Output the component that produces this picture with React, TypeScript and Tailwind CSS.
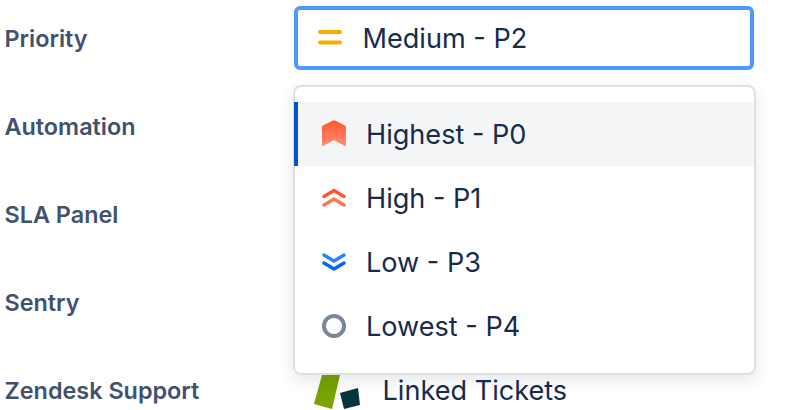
import React from 'react';

const labels = ['Priority', 'Automation', 'SLA Panel', 'Sentry', 'Zendesk Support'];

function MediumIcon() {
  return (
    <svg width="24" height="24" viewBox="0 0 24 24" fill="#ffab00">
      <rect x="0" y="4" width="24" height="4" rx="2" />
      <rect x="0" y="14.5" width="24" height="4" rx="2" />
    </svg>
  );
}

function HighestIcon() {
  return (
    <svg width="24" height="28" viewBox="0 0 24 28">
      <defs>
        <linearGradient id="highest" x1="0" y1="0" x2="0" y2="1">
          <stop offset="0" stopColor="#ff5630" />
          <stop offset="1" stopColor="#ff8f73" />
        </linearGradient>
      </defs>
      <path
        d="M11 0.5 Q12 0 13 0.5 L23 5.5 Q24 6 24 7 V25 Q24 26.5 22.5 25.8 L12.8 20.4 Q12 20 11.2 20.4 L1.5 25.8 Q0 26.5 0 25 V7 Q0 6 1 5.5 Z"
        fill="url(#highest)"
      />
    </svg>
  );
}

function HighIcon() {
  return (
    <svg width="24" height="20" viewBox="0 0 24 20" fill="none" strokeWidth="3.4" strokeLinecap="round" strokeLinejoin="round">
      <path d="M2 8.5 L12 2.5 L22 8.5" stroke="#ff5630" />
      <path d="M2 17 L12 11 L22 17" stroke="#ff7452" />
    </svg>
  );
}

function LowIcon() {
  return (
    <svg width="24" height="20" viewBox="0 0 24 20" fill="none" strokeWidth="3.4" strokeLinecap="round" strokeLinejoin="round">
      <path d="M2 3 L12 9 L22 3" stroke="#2684ff" />
      <path d="M2 11 L12 17 L22 11" stroke="#0065ff" />
    </svg>
  );
}

function LowestIcon() {
  return (
    <svg width="24" height="24" viewBox="0 0 24 24" fill="none">
      <circle cx="12" cy="12" r="10" stroke="#7a869a" strokeWidth="4" />
    </svg>
  );
}

function ZendeskLogo() {
  return (
    <svg width="50" height="36" viewBox="0 0 50 36">
      <path d="M9 0 H27 L19 34 L1 29 Z" fill="#78a300" />
      <path d="M27 18 L45 13 L47 30 L31 34 Z" fill="#03363d" />
    </svg>
  );
}

const options = [
  { name: 'Highest - P0', icon: <HighestIcon />, active: true },
  { name: 'High - P1', icon: <HighIcon />, active: false },
  { name: 'Low - P3', icon: <LowIcon />, active: false },
  { name: 'Lowest - P4', icon: <LowestIcon />, active: false },
];

export default function App() {
  return (
    <div className="relative h-[410px] w-[786px] overflow-hidden bg-white font-['Inter',sans-serif]">
      <div className="flex">
        <div className="flex w-[294px] flex-col pl-[4.5px] pt-[17px]">
          {labels.map((label) => (
            <div key={label} className="flex h-[88px] items-start text-[23.4px] leading-[44px] font-semibold whitespace-nowrap text-[#42526e]">
              {label}
            </div>
          ))}
        </div>
        <div className="flex flex-col pt-[6px]">
          <div className="flex h-[64px] w-[460px] items-center rounded-[6px] border-[4px] border-[#4c9aff] pl-[20px] text-[27.1px] text-[#172b4d]">
            <MediumIcon />
            <span className="ml-[20.5px] mt-[2px]">Medium - P2</span>
          </div>
          <div className="mt-[303px] flex items-start pl-[19px] text-[27.1px] leading-[36px] text-[#172b4d]">
            <span className="mt-[2px]">
              <ZendeskLogo />
            </span>
            <span className="ml-[19.5px] whitespace-nowrap">Linked Tickets</span>
          </div>
        </div>
      </div>

      {/* Dropdown menu */}
      <div className="absolute left-[292.5px] top-[85px] z-10 w-[463.5px] rounded-[8px] border-2 border-[#dfdfdf] bg-white py-[15px] shadow-[0_6px_16px_rgba(9,30,66,0.1)]">
        {options.map((opt) => (
          <div
            key={opt.name}
            className={
              opt.active
                ? 'ml-[-1px] flex h-[64px] items-center border-l-4 border-[#0052cc] bg-[#f4f5f7] text-[27.1px] text-[#172b4d]'
                : 'ml-[-1px] flex h-[64px] items-center border-l-4 border-transparent text-[27.1px] text-[#172b4d]'
            }
          >
            <span className="ml-[24px] flex w-[24px] justify-center">{opt.icon}</span>
            <span className="ml-[20.5px] mt-[2px]">{opt.name}</span>
          </div>
        ))}
      </div>
    </div>
  );
}
